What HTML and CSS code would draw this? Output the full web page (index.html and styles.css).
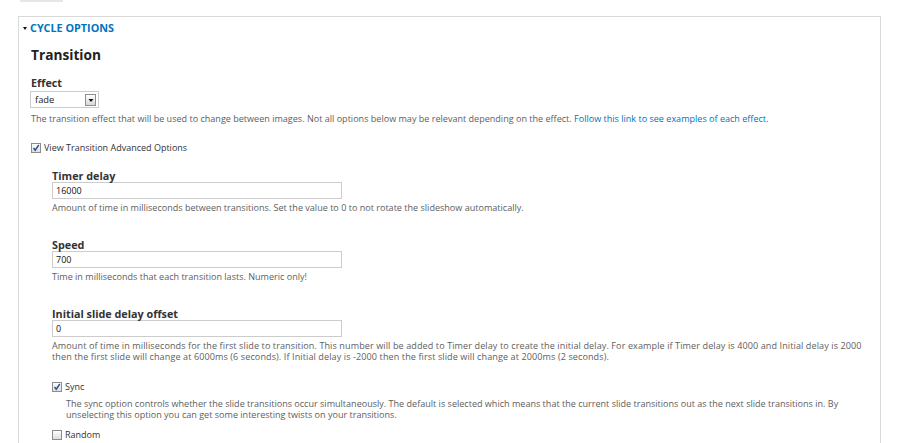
FILE: index.html
```html
<!DOCTYPE html>
<html>
<head>
<meta charset="utf-8">
<link rel="stylesheet" href="styles.css">
</head>
<body>
<div class="topbar"></div>
<div class="fieldset">
  <div class="legend"><span class="tri"></span>CYCLE OPTIONS</div>
  <div class="fs-body">
    <h2 class="heading">Transition</h2>
    <div class="field">
      <div class="lbl">Effect</div>
      <div class="select">
        <span class="sel-text">fade</span>
        <span class="sel-btn"><svg width="8" height="10" viewBox="0 0 8 10"><path d="M1.5 4 L6.5 4 L4 7 Z" fill="#111"/></svg></span>
      </div>
      <div class="desc">The transition effect that will be used to change between images. Not all options below may be relevant depending on the effect. <a class="link" href="#">Follow this link to see examples of each effect.</a></div>
    </div>
    <div class="check-row first-check">
      <svg class="cb" width="10" height="10" viewBox="0 0 10 10"><defs><linearGradient id="g1" x1="0" y1="0" x2="0" y2="1"><stop offset="0" stop-color="#ffffff"/><stop offset="1" stop-color="#dcdcdc"/></linearGradient></defs><rect x="0.5" y="0.5" width="9" height="9" fill="url(#g1)" stroke="#8c8c8c"/><path d="M2.5 5 L4.2 7.2 L7.8 2" fill="none" stroke="#2c4f92" stroke-width="1.4"/></svg>
      <span>View Transition Advanced Options</span>
    </div>
    <div class="advanced">
      <div class="field">
        <div class="lbl lbl-adv">Timer delay</div>
        <div class="input">16000</div>
        <div class="desc desc-adv">Amount of time in milliseconds between transitions. Set the value to 0 to not rotate the slideshow automatically.</div>
      </div>
      <div class="field">
        <div class="lbl lbl-next">Speed</div>
        <div class="input">700</div>
        <div class="desc desc-adv">Time in milliseconds that each transition lasts. Numeric only!</div>
      </div>
      <div class="field">
        <div class="lbl lbl-next">Initial slide delay offset</div>
        <div class="input">0</div>
        <div class="desc desc-adv desc-wide">Amount of time in milliseconds for the first slide to transition. This number will be added to Timer delay to create the initial delay. For example if Timer delay is 4000 and Initial delay is 2000 then the first slide will change at 6000ms (6 seconds). If Initial delay is -2000 then the first slide will change at 2000ms (2 seconds).</div>
      </div>
      <div class="check-row sync-row">
        <svg class="cb" width="10" height="10" viewBox="0 0 10 10"><defs><linearGradient id="g2" x1="0" y1="0" x2="0" y2="1"><stop offset="0" stop-color="#ffffff"/><stop offset="1" stop-color="#dcdcdc"/></linearGradient></defs><rect x="0.5" y="0.5" width="9" height="9" fill="url(#g2)" stroke="#8c8c8c"/><path d="M2.5 5 L4.2 7.2 L7.8 2" fill="none" stroke="#2c4f92" stroke-width="1.4"/></svg>
        <span>Sync</span>
      </div>
      <div class="desc check-desc">The sync option controls whether the slide transitions occur simultaneously. The default is selected which means that the current slide transitions out as the next slide transitions in. By unselecting this option you can get some interesting twists on your transitions.</div>
      <div class="check-row random-row">
        <svg class="cb" width="10" height="10" viewBox="0 0 10 10"><defs><linearGradient id="g3" x1="0" y1="0" x2="0" y2="1"><stop offset="0" stop-color="#ffffff"/><stop offset="1" stop-color="#dcdcdc"/></linearGradient></defs><rect x="0.5" y="0.5" width="9" height="9" fill="url(#g3)" stroke="#8c8c8c"/></svg>
        <span>Random</span>
      </div>
    </div>
  </div>
</div>
</body>
</html>
```

FILE: styles.css
```css
html, body {
  margin: 0;
  padding: 0;
  background: #ffffff;
  overflow: hidden;
}
body {
  font-family: "Open Sans", "DejaVu Sans", sans-serif;
  color: #333333;
  width: 900px;
  height: 443px;
}
.topbar {
  width: 43px;
  height: 2px;
  margin-left: 20px;
  background: #e6e6e6;
}
.fieldset {
  box-sizing: border-box;
  margin: 14px 0 0 18px;
  width: 863px;
  height: 500px;
  border: 1px solid #d9d9d9;
  border-bottom: 0;
}
.legend {
  display: flex;
  align-items: center;
  margin-top: 5px;
  padding-left: 3px;
  font-size: 10.8px;
  line-height: 12px;
  font-weight: bold;
  color: #0074bd;
}
.tri {
  width: 0;
  height: 0;
  margin-left: 1px;
  border-left: 2.5px solid transparent;
  border-right: 2.5px solid transparent;
  border-top: 3px solid #111;
  margin-right: 3px;
}
.fs-body {
  padding-left: 12px;
}
.heading {
  margin: 12px 0 0;
  font-size: 13.7px;
  line-height: 18px;
  font-weight: bold;
  color: #222222;
}
.lbl {
  font-size: 10.8px;
  line-height: 12px;
  font-weight: bold;
  color: #333333;
  margin-top: 13px;
}
.select {
  box-sizing: border-box;
  margin: 2px 0 0 -1px;
  width: 69px;
  height: 17px;
  border: 1px solid #cccccc;
  display: flex;
  align-items: center;
  justify-content: space-between;
  padding: 0 2px 0 4px;
  font-size: 9.3px;
  color: #222;
}
.sel-btn {
  box-sizing: border-box;
  width: 11px;
  height: 12px;
  border: 1px solid #8e8e8e;
  background: linear-gradient(#ffffff, #d8d8d8);
  display: flex;
  align-items: center;
  justify-content: center;
}
.desc {
  margin-top: 5px;
  font-size: 9.05px;
  line-height: 11px;
  color: #606060;
}
.link {
  color: #0074bd;
  text-decoration: none;
}
.check-row {
  display: flex;
  align-items: center;
  gap: 3px;
  font-size: 9px;
  line-height: 12px;
  color: #333333;
}
.first-check {
  margin-top: 18px;
}
.advanced {
  padding-left: 21px;
}
.lbl-adv {
  margin-top: 16px;
}
.lbl-next {
  margin-top: 26px;
}
.input {
  box-sizing: border-box;
  width: 290px;
  height: 17px;
  border: 1px solid #cccccc;
  padding: 0 3px;
  font-size: 9px;
  line-height: 15px;
  color: #111;
}
.desc-adv {
  margin-top: 3px;
  padding-right: 20px;
}
.desc-adv.desc-wide {
  letter-spacing: 0.1px;
  padding-right: 4px;
}
.sync-row {
  margin-top: 19px;
}
.check-desc {
  margin-top: 5px;
  padding-left: 14px;
  padding-right: 40px;
}
.random-row {
  margin-top: 9px;
}
```
